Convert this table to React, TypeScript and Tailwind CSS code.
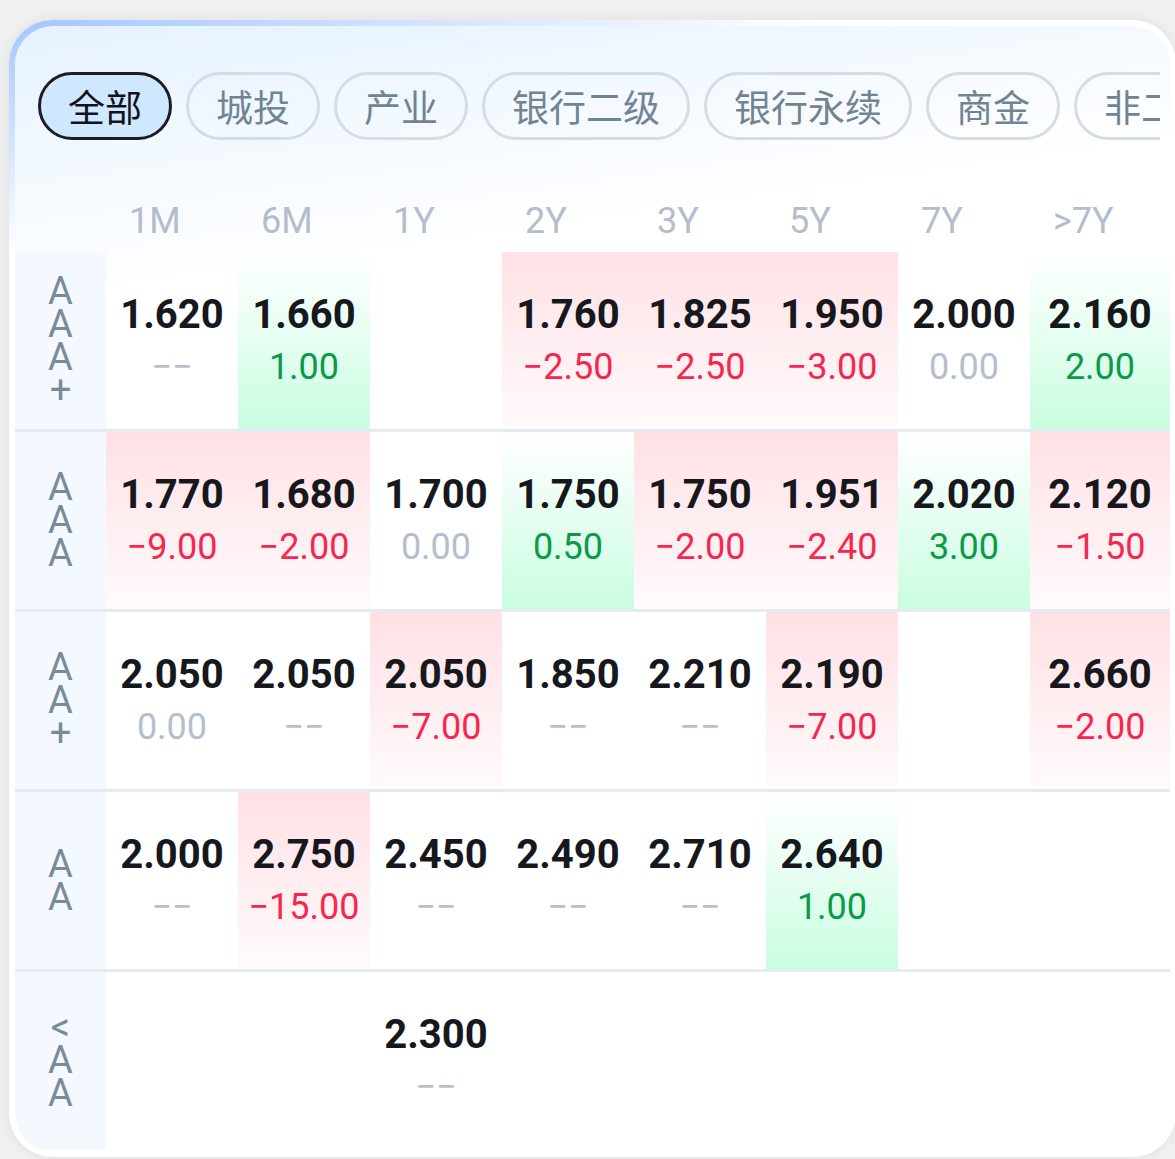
import React from "react";

type Trend = "up" | "down" | "flat" | "none";

interface Cell {
  value: string;
  change: string;
  trend: Trend;
}

interface Row {
  label: string;
  cells: (Cell | null)[];
}

const MINUS = "\u2212";

const tabs = ["全部", "城投", "产业", "银行二级", "银行永续", "商金", "非二永"];
const terms = ["1M", "6M", "1Y", "2Y", "3Y", "5Y", "7Y", ">7Y"];

const c = (value: string, change: string): Cell => {
  if (change === "--") return { value, change: `${MINUS}${MINUS}`, trend: "none" };
  if (change.startsWith("-")) return { value, change: MINUS + change.slice(1), trend: "down" };
  if (change === "0.00") return { value, change, trend: "flat" };
  return { value, change, trend: "up" };
};

const rows: Row[] = [
  {
    label: "AAA+",
    cells: [
      c("1.620", "--"),
      c("1.660", "1.00"),
      null,
      c("1.760", "-2.50"),
      c("1.825", "-2.50"),
      c("1.950", "-3.00"),
      c("2.000", "0.00"),
      c("2.160", "2.00"),
    ],
  },
  {
    label: "AAA",
    cells: [
      c("1.770", "-9.00"),
      c("1.680", "-2.00"),
      c("1.700", "0.00"),
      c("1.750", "0.50"),
      c("1.750", "-2.00"),
      c("1.951", "-2.40"),
      c("2.020", "3.00"),
      c("2.120", "-1.50"),
    ],
  },
  {
    label: "AA+",
    cells: [
      c("2.050", "0.00"),
      c("2.050", "--"),
      c("2.050", "-7.00"),
      c("1.850", "--"),
      c("2.210", "--"),
      c("2.190", "-7.00"),
      null,
      c("2.660", "-2.00"),
    ],
  },
  {
    label: "AA",
    cells: [
      c("2.000", "--"),
      c("2.750", "-15.00"),
      c("2.450", "--"),
      c("2.490", "--"),
      c("2.710", "--"),
      c("2.640", "1.00"),
      null,
      null,
    ],
  },
  {
    label: "<AA",
    cells: [null, null, c("2.300", "--"), null, null, null, null, null],
  },
];

const cellBg: Record<Trend, string> = {
  down: "bg-linear-to-b from-[#ffe1e5] to-[#fffafb]",
  up: "bg-linear-to-b from-[#ffffff] to-[#c9fde2]",
  flat: "",
  none: "",
};

const changeColor: Record<Trend, string> = {
  down: "text-[#f7264d]",
  up: "text-[#0a9a48]",
  flat: "text-[#b4bece]",
  none: "text-[#b6c0ce]",
};

function RateCell({ cell }: { cell: Cell | null }) {
  if (!cell) return <div />;
  return (
    <div className={`flex flex-col items-center justify-center ${cellBg[cell.trend]}`}>
      <span className="text-[40px] leading-[52px] font-bold text-[#16181d]">{cell.value}</span>
      <span className={`text-[36px] leading-[52px] font-normal ${changeColor[cell.trend]}`}>{cell.change}</span>
    </div>
  );
}

export default function App() {
  return (
    <div className="w-[1175px] h-[1159px] overflow-hidden bg-[#f0f0f0] pl-[9px] pt-[20px] font-['Roboto','Noto_Sans_CJK_SC',sans-serif]">
      <div className="w-[1167px] h-[1137px] rounded-[44px] p-[6px] bg-[linear-gradient(164deg,#a3c6ff_0%,#ffffff_16%)] shadow-[0_0_14px_rgba(0,0,0,0.07)]">
        <div className="h-full rounded-[38px] overflow-hidden bg-[linear-gradient(172deg,#e5f2ff_0%,#ffffff_22%)] flex flex-col">
          {/* category tabs */}
          <div className="mt-[46px] ml-[23px] mr-[10px] overflow-hidden flex gap-[14px]">
            {tabs.map((t, i) => (
              <div
                key={t}
                className={`shrink-0 h-[68px] px-[27px] rounded-full border-[3px] flex items-center text-[37px] leading-none font-['Noto_Sans_CJK_SC',sans-serif] ${
                  i === 0
                    ? "border-[#1b1d21] bg-[#cfe8ff] text-[#111318]"
                    : "border-[#d6dce4] text-[#718494]"
                }`}
              >
                {t}
              </div>
            ))}
          </div>

          {/* term headers */}
          <div className="mt-[50px] h-[62px] grid grid-cols-[91px_repeat(7,132px)_1fr] items-center">
            <div />
            {terms.map((t) => (
              <div key={t} className="pl-[23px] text-[36px] leading-none text-[#b3bdcc]">
                {t}
              </div>
            ))}
          </div>

          {/* rating rows */}
          {rows.map((row, ri) => (
            <React.Fragment key={row.label}>
              {ri > 0 && <div className="h-[3px] shrink-0 bg-[#e6ebf0]" />}
              <div className="h-[177px] shrink-0 grid grid-cols-[91px_repeat(7,132px)_1fr]">
                <div className="bg-[#f4f9ff] flex flex-col items-center justify-center text-[38px] leading-[33px] text-[#7a8b98]">
                  {row.label.split("").map((ch, k) => (
                    <span key={k}>{ch}</span>
                  ))}
                </div>
                {row.cells.map((cell, ci) => (
                  <RateCell key={ci} cell={cell} />
                ))}
              </div>
            </React.Fragment>
          ))}
        </div>
      </div>
    </div>
  );
}
